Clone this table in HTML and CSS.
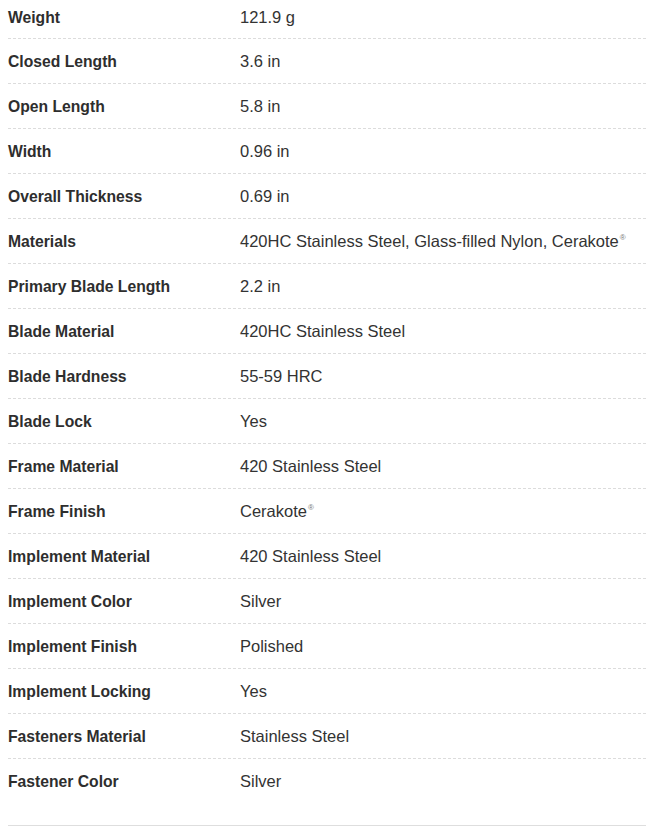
FILE: index.html
```html
<!DOCTYPE html>
<html>
<head>
<meta charset="utf-8">
<link rel="stylesheet" href="styles.css">
</head>
<body>
<div class="specs">
  <div class="row"><div class="label">Weight</div><div class="value">121.9 g</div></div>
  <div class="row"><div class="label">Closed Length</div><div class="value">3.6 in</div></div>
  <div class="row"><div class="label">Open Length</div><div class="value">5.8 in</div></div>
  <div class="row"><div class="label">Width</div><div class="value">0.96 in</div></div>
  <div class="row"><div class="label">Overall Thickness</div><div class="value">0.69 in</div></div>
  <div class="row"><div class="label">Materials</div><div class="value">420HC Stainless Steel, Glass-filled Nylon, Cerakote<sup>®</sup></div></div>
  <div class="row"><div class="label">Primary Blade Length</div><div class="value">2.2 in</div></div>
  <div class="row"><div class="label">Blade Material</div><div class="value">420HC Stainless Steel</div></div>
  <div class="row"><div class="label">Blade Hardness</div><div class="value">55-59 HRC</div></div>
  <div class="row"><div class="label">Blade Lock</div><div class="value">Yes</div></div>
  <div class="row"><div class="label">Frame Material</div><div class="value">420 Stainless Steel</div></div>
  <div class="row"><div class="label">Frame Finish</div><div class="value">Cerakote<sup>®</sup></div></div>
  <div class="row"><div class="label">Implement Material</div><div class="value">420 Stainless Steel</div></div>
  <div class="row"><div class="label">Implement Color</div><div class="value">Silver</div></div>
  <div class="row"><div class="label">Implement Finish</div><div class="value">Polished</div></div>
  <div class="row"><div class="label">Implement Locking</div><div class="value">Yes</div></div>
  <div class="row"><div class="label">Fasteners Material</div><div class="value">Stainless Steel</div></div>
  <div class="row"><div class="label">Fastener Color</div><div class="value">Silver</div></div>
</div>
<div class="rule"></div>
</body>
</html>
```
FILE: styles.css
```css
html, body {
  margin: 0;
  padding: 0;
  background: #fff;
}
body {
  padding: 0 0 0 8px;
  font-family: "Liberation Sans", Arial, sans-serif;
  color: #2e2e2e;
}
.specs {
  display: flex;
  flex-direction: column;
}
.row {
  box-sizing: border-box;
  display: grid;
  grid-template-columns: 232px 1fr;
  align-items: baseline;
  height: 45px;
  padding-top: 12px;
  border-bottom: 1px dashed #dcdcdc;
}
.row:first-child {
  height: 39px;
  padding-top: 7px;
}
.row:last-child {
  height: 44px;
  border-bottom: none;
}
.label {
  font-weight: bold;
  font-size: 15.7px;
  line-height: 20px;
}
.value {
  font-size: 16.5px;
  line-height: 20px;
  color: #333;
}
.value sup {
  font-size: 8px;
  color: #777;
  vertical-align: 7px;
  line-height: 0;
  margin-left: 1px;
}
.rule {
  margin-top: 22px;
  height: 1px;
  background: #dedede;
}
```
